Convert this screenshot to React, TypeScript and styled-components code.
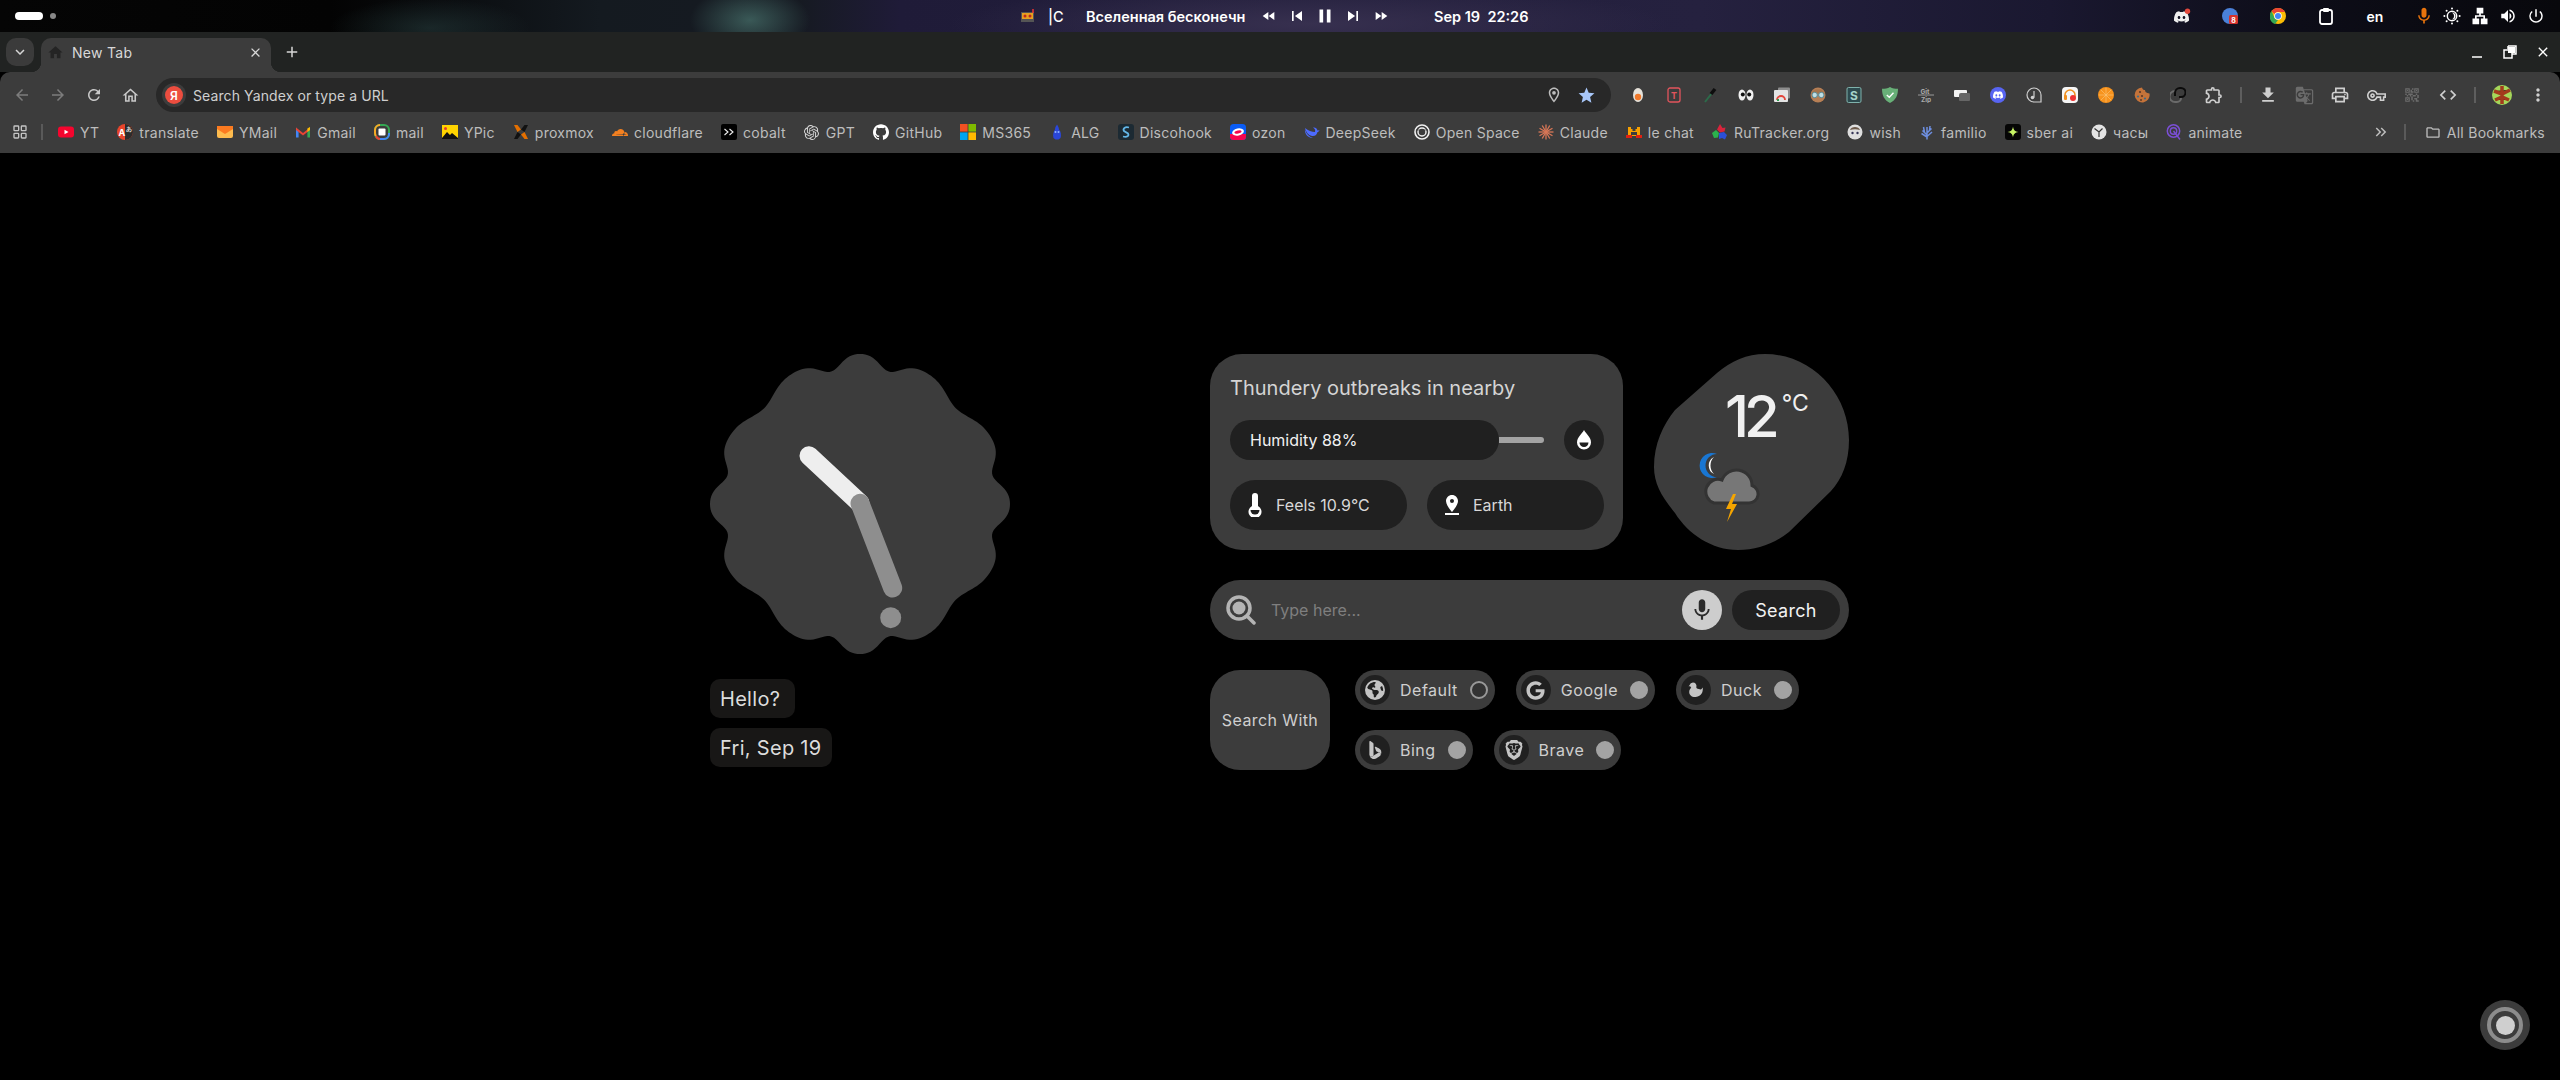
import React from "react";
import styled, { createGlobalStyle } from "styled-components";
import {
  MdArrowBack, MdArrowForward, MdRefresh, MdOutlineHome, MdHome, MdOutlineLocationOn, MdStar, MdFileDownload,
  MdOutlinePrint, MdOutlineVpnKey, MdQrCode2, MdCode, MdMoreVert, MdOutlineFolder, MdKeyboardDoubleArrowRight,
  MdOutlineExtension, MdGTranslate, MdSkipPrevious, MdSkipNext, MdPause, MdFastRewind, MdFastForward, MdMic,
  MdLan, MdVolumeUp, MdPowerSettingsNew, MdKeyboardArrowDown, MdClose, MdAdd, MdPinDrop,
} from "react-icons/md";
import { LayoutGrid } from "lucide-react";
import { SiDiscord, SiGithub, SiOpenai, SiCloudflare, SiBrave } from "react-icons/si";
import { FaEarthAmericas, FaGoogle } from "react-icons/fa6";
import { BsBing } from "react-icons/bs";

const Global = createGlobalStyle`
  html, body { margin: 0; padding: 0; background: #000; }
  body { font-family: Inter, "Liberation Sans", sans-serif; }
  * { box-sizing: border-box; }
`;

const Page = styled.div`
  width: 2560px; height: 1080px; overflow: hidden; display: flex; flex-direction: column; background: #000;
`;

/* ---------- system bar ---------- */
const SystemBar = styled.div`
  height: 32px; flex: none; display: grid; grid-template-columns: 1020px 511px 1fr; align-items: center;
  color: #fff; font-size: 13px; font-weight: 600;
  background:
    radial-gradient(ellipse 60px 34px at 750px 20px, rgba(70,110,105,.75), transparent),
    radial-gradient(ellipse 100px 30px at 430px 28px, rgba(50,80,80,.4), transparent),
    radial-gradient(ellipse 360px 40px at 1310px 24px, #37304f, transparent),
    linear-gradient(90deg, #050505 0, #030303 330px, #141a20 600px, #161a22 800px, #1f1b38 900px, #25213f 1700px, #1a1830 2050px, #0d0d18 2300px, #08080c 2560px);
`;
const Workspaces = styled.div`display: flex; align-items: center; gap: 7px; padding-left: 15px;`;
const WorkspacePill = styled.span`width: 28px; height: 8px; border-radius: 4px; background: #fff;`;
const WorkspaceDot = styled.span`width: 6px; height: 6px; border-radius: 50%; background: #888;`;
const MediaRow = styled.div`display: flex; align-items: center; width: 511px; font-size: 14.5px;`;
const MediaGlyph = styled.span`
  width: 20px; margin-left: -2px; margin-right: 10px; height: 16px; display: flex; align-items: center; justify-content: center;
`;
const MediaTag = styled.span`width: 38px; font-weight: 500;`;
const MediaTitle = styled.span`width: 163px; white-space: nowrap;`;
const MediaControls = styled.div`display: flex; margin-left: 6px; width: 140px;`;
const MediaBtn = styled.span`width: 28px; height: 20px; display: flex; justify-content: center; align-items: center;`;
const Clocktext = styled.span`margin-left: 39px; white-space: pre;`;
const TrayRow = styled.div`display: flex; align-items: center; justify-content: flex-end; padding-right: 10px;`;
const TrayItem = styled.span<{ $w: number; $mr?: number }>`
  width: ${p => p.$w}px; height: 24px; margin-right: ${p => p.$mr ?? 0}px; display: flex; align-items: center; justify-content: center; font-size: 14px;
`;

/* ---------- tab strip ---------- */
const TabStrip = styled.div`
  height: 40px; flex: none; background: #212322; display: flex; padding: 6px 0 0 6px; color: #d6d6d6;
`;
const TabSearch = styled.div`
  width: 28px; height: 28px; border-radius: 10px; background: #3b3b3b; display: flex; align-items: center; justify-content: center;
`;
const Tab = styled.div`
  position: relative; width: 230px; height: 34px; margin-left: 7px; background: #3c3c3c; border-radius: 10px 10px 0 0;
  display: flex; align-items: center; padding: 0 8px 6px 6px; font-size: 14px; letter-spacing: .3px; color: #d8d8d8;
  &::before, &::after { content: ""; position: absolute; bottom: 0; width: 10px; height: 10px; }
  &::before { left: -10px; background: radial-gradient(circle at 0 0, transparent 10px, #3c3c3c 10.5px); }
  &::after { right: -10px; background: radial-gradient(circle at 100% 0, transparent 10px, #3c3c3c 10.5px); }
`;
const TabTitle = styled.span`flex: 1; margin-left: 8px;`;
const NewTab = styled.div`width: 28px; height: 28px; margin-left: 7px; display: flex; align-items: center; justify-content: center;`;
const WindowControls = styled.div`margin-left: auto; display: flex; height: 28px; align-items: center; padding-right: 1px;`;
const WindowBtn = styled.span`width: 33px; height: 28px; display: flex; align-items: center; justify-content: center;`;

/* ---------- toolbar ---------- */
const Chrome = styled.div`background: #3c3c3c; border-radius: 10px 10px 0 0; flex: none; height: 81px;`;
const Toolbar = styled.div`height: 44px; display: flex; align-items: flex-start; padding: 6px 0 0 4px; color: #c8c8c8;`;
const NavBtn = styled.span<{ $dim?: boolean }>`
  width: 36px; height: 34px; display: flex; align-items: center; justify-content: center;
  color: ${p => (p.$dim ? "#7c7c7c" : "#c8c8c8")};
`;
const Omnibox = styled.div`
  width: 1455px; height: 34px; margin-left: 8px; border-radius: 17px; background: #282828; display: flex; align-items: center;
  padding: 0 14px 0 9px; font-size: 14px; letter-spacing: .1px; color: #cfcfcf;
`;
const OmniBadge = styled.span`
  width: 18px; height: 18px; border-radius: 50%; background: #ec4d3f; color: #fff; font-size: 12px; font-weight: 600;
  display: flex; align-items: center; justify-content: center; margin-right: 10px; box-shadow: 0 0 0 3px #3c3c3c;
`;
const OmniText = styled.span`flex: 1;`;
const OmniIcon = styled.span<{ $c: string }>`width: 32px; height: 20px; display: flex; justify-content: center; align-items: center; color: ${p => p.$c}; margin-right: -5px; margin-left: 5px;`;
const ExtGroup = styled.div`display: flex; margin-left: 9px;`;
const ToolGroup = styled.div`display: flex;`;
const ExtSlot = styled.span<{ $dim?: boolean }>`
  width: 36px; height: 34px; display: flex; align-items: center; justify-content: center;
  color: ${p => (p.$dim ? "#6c6c6c" : "#cfcfcf")};
`;
const Divider = styled.span<{ $mx: number }>`
  width: 2px; height: 16px; background: #5e5e5e; margin: 9px ${p => p.$mx}px 0; flex: none;
`;

/* ---------- bookmarks ---------- */
const BookmarkBar = styled.div`height: 32px; display: flex; align-items: center; padding-left: 11px; font-size: 14px; color: #bdbdbd;`;
const AppsBtn = styled.span`width: 18px; display: flex; justify-content: center; color: #c4c4c4;`;
const BookmarkSep = styled.span<{ $ml: number; $mr: number }>`width: 2px; height: 16px; background: #5a5a5a; margin: 0 ${p => p.$mr}px 0 ${p => p.$ml}px;`;
const Bookmark = styled.span`display: flex; align-items: center; gap: 6px; padding: 0 9px; white-space: nowrap; letter-spacing: .27px;`;
const BookmarkEnd = styled.div`margin-left: auto; display: flex; align-items: center; padding-right: 6px;`;
const FavBox = styled.span`width: 16px; height: 16px; display: flex; align-items: center; justify-content: center; flex: none;`;

/* ---------- new tab page ---------- */
const Main = styled.main`
  flex: 1; display: flex; justify-content: center; gap: 200px; padding: 201px 1px 0 0;
  font-family: Inter, "Open Sans", sans-serif;
`;
const LeftCol = styled.section`width: 300px; display: flex; flex-direction: column; align-items: flex-start;`;
const ClockFace = styled.svg`width: 300px; height: 300px; display: block; margin-bottom: 25px;`;
const Tag = styled.div`
  height: 39px; min-width: 85px; padding: 0 10px; margin-bottom: 10px; border-radius: 10px; background: #181716; color: #dcdcdc;
  font-size: 20px; letter-spacing: .3px; display: flex; align-items: center;
`;
const RightCol = styled.section`width: 639px; display: flex; flex-direction: column; gap: 30px;`;
const WeatherRow = styled.div`display: flex; justify-content: space-between;`;
const Card = styled.div`
  width: 413px; height: 196px; border-radius: 32px; background: #3c3c3c; padding: 20px 19px 0 20px;
`;
const CardTitle = styled.div`height: 28px; margin-bottom: 18px; font-size: 20px; line-height: 28px; color: #d4d4d4; white-space: nowrap;`;
const HumidityRow = styled.div`display: flex; gap: 20px; margin-bottom: 20px;`;
const Track = styled.div`width: 314px; height: 40px; display: flex; align-items: center;`;
const TrackFill = styled.div`
  height: 40px; border-radius: 20px; background: #202020; color: #f2f2f2; font-size: 16px; display: flex; align-items: center; padding-left: 20px;
`;
const TrackRest = styled.div`flex: 1; height: 6px; background: #a3a3a3; border-radius: 0 3px 3px 0;`;
const RoundIcon = styled.div`width: 40px; height: 40px; border-radius: 50%; background: #202020; display: flex; align-items: center; justify-content: center;`;
const InfoRow = styled.div`display: flex; gap: 20px;`;
const InfoPill = styled.div`
  width: 177px; height: 50px; border-radius: 25px; background: #202020; display: flex; align-items: center; padding-left: 9px; gap: 5px;
  font-size: 16px; color: #d8d8d8; white-space: nowrap;
`;
const InfoIcon = styled.span`width: 32px; display: flex; justify-content: center;`;
const Blob = styled.div`
  width: 195px; height: 196px; background: #3c3c3c; padding: 33px 0 0 40px;
  clip-path: path("M111 0 C158 0 195 40 195 86 C195 108 188 125 177 137 L135 178 C120 190 103 196 84 196 C58 196 34 180 21 159 C8 143 0 130 0 113 C0 90 9 71 21 56 L63 19 C77 7 93 0 111 0 Z");
`;
const Temp = styled.div`display: flex; align-items: flex-start; margin-left: 31px; height: 65px; color: #f0f0f0;`;
const TempValue = styled.span`font-size: 58px; line-height: 58px; font-weight: 500; letter-spacing: -5px; margin-right: 7px;`;
const TempUnit = styled.span`font-size: 23px; line-height: 26px; margin-top: 3px;`;
const WeatherGlyph = styled.svg`width: 66px; height: 71px; display: block;`;
const SearchBar = styled.form`
  height: 60px; border-radius: 30px; background: #3c3c3c; display: flex; align-items: center; padding: 0 9px 0 16px;
`;
const SearchInput = styled.input`
  flex: 1; background: transparent; border: 0; outline: 0; margin-left: 13px; font: 400 16px Inter, sans-serif; color: #ddd;
  &::placeholder { color: #7f7f7f; opacity: 1; }
`;
const MicBtn = styled.span`width: 40px; height: 40px; border-radius: 50%; background: #cdcdcd; display: flex; align-items: center; justify-content: center; color: #2b2b2b;`;
const SearchBtn = styled.span`width: 108px; height: 40px; margin-left: 10px; border-radius: 20px; background: #202020; color: #f2f2f2; font-size: 18px; letter-spacing: .3px; display: flex; align-items: center; justify-content: center;`;
const EngineRow = styled.div`display: flex; gap: 25px;`;
const EngineHead = styled.div`width: 120px; height: 100px; flex: none; border-radius: 30px; background: #3c3c3c; color: #cfcfcf; font-size: 16px; letter-spacing: .4px; display: flex; align-items: center; justify-content: center; white-space: nowrap;`;
const Chips = styled.div`display: flex; flex-wrap: wrap; gap: 20px 21px; width: 494px; align-content: flex-start;`;
const Chip = styled.label`
  height: 40px; border-radius: 20px; background: #3c3c3c; display: flex; align-items: center; padding: 0 7px 0 5px; color: #cfcfcf; font-size: 16px;
`;
const ChipIcon = styled.span`width: 30px; height: 30px; border-radius: 50%; background: #202020; display: flex; align-items: center; justify-content: center; color: #c4c4c4; margin-right: 10px;`;
const ChipLabel = styled.span`margin-right: 12px; letter-spacing: .5px;`;
const Radio = styled.span<{ $off?: boolean }>`
  width: 18px; height: 18px; border-radius: 50%; background: ${p => (p.$off ? "#333" : "#a3a3a3")}; border: 2px solid ${p => (p.$off ? "#999" : "#a3a3a3")};
`;
const Floater = styled.div`
  position: fixed; right: 30px; bottom: 30px; width: 50px; height: 50px; border-radius: 50%; background: #3c3c3c;
  display: flex; align-items: center; justify-content: center;
`;
const FloaterRing = styled.div`width: 36px; height: 36px; border-radius: 50%; border: 4px solid #8c8c8c; background: #3c3c3c; display: flex; align-items: center; justify-content: center;`;
const FloaterCore = styled.div`width: 19px; height: 19px; border-radius: 50%; background: #cfcfcf;`;

/* ---------- drawings ---------- */
const Ico: React.FC<{ children: React.ReactNode }> = ({ children }) => (
  <svg width="16" height="16" viewBox="0 0 16 16">{children}</svg>
);
const txt = { fontFamily: "Inter, sans-serif", fontWeight: 700 } as const;

const fav: Record<string, React.ReactNode> = {
  yt: <Ico><rect y="2.5" width="16" height="11" rx="3" fill="#f5052e" /><path d="M6.5 5.7v4.6L10.5 8z" fill="#fff" /></Ico>,
  translate: <Ico><circle cx="8" cy="8" r="8" fill="#e8452c" /><path d="M8 0a8 8 0 0 1 0 16z" fill="#2c2c2c" /><text x="1.5" y="12" fontSize="9" fill="#fff" style={txt}>A</text><text x="8.5" y="7" fontSize="6" fill="#ddd" style={txt}>あ</text></Ico>,
  ymail: <Ico><rect y="2" width="16" height="12" rx="2" fill="#fdbb4e" /><path d="M0 2h16v3L8 10 0 5z" fill="#fb7a20" /></Ico>,
  gmail: <Ico><path d="M1 3.5v10h2.6V7z" fill="#4285f4" /><path d="M15 3.5v10h-2.6V7z" fill="#34a853" /><path d="M1 3.5 8 9l7-5.5V6L8 11.500 1 6z" fill="#ea4335" /><path d="M12.400 4.500 15 3v3l-2.600 2z" fill="#fbbc04" /></Ico>,
  mail: <Ico><rect x="1" y="1" width="14" height="14" rx="5" fill="none" stroke="#34a853" strokeWidth="2" /><path d="M2 12a5 5 0 0 1-1-3V6a5 5 0 0 1 5-5" fill="none" stroke="#f9a825" strokeWidth="2" /><path d="M6 15a5 5 0 0 1-4-3" fill="none" stroke="#ea4335" strokeWidth="2" /><path d="M15 9v1a5 5 0 0 1-5 5H6" fill="none" stroke="#4285f4" strokeWidth="2" /><rect x="4.500" y="4.500" width="7" height="7" rx="1" fill="#fff" /></Ico>,
  ypic: <Ico><rect y="1" width="16" height="14" fill="#ffd400" /><circle cx="3.500" cy="4.500" r="1.500" fill="#e53935" /><path d="M0 14 5 8l3 3 2-2 6 5v1H0z" fill="#111" /></Ico>,
  proxmox: <Ico><path d="M1 1h3.500L8 5.500 4.500 8z" fill="#e57000" /><path d="M15 1h-3.500L8 5.500 11.500 8z" fill="#111" /><path d="M1 15h3.500L8 10.500 4.500 8z" fill="#111" /><path d="M15 15h-3.500L8 10.500 11.500 8z" fill="#e57000" /></Ico>,
  cloudflare: <SiCloudflare size={17} color="#f38020" />,
  cobalt: <Ico><rect width="16" height="16" rx="2" fill="#000" /><path d="M3.500 5 7 8l-3.500 3M8.500 5 12 8l-3.500 3" fill="none" stroke="#eee" strokeWidth="1.100" /></Ico>,
  gpt: <SiOpenai size={15} color="#d8d8d8" />,
  github: <SiGithub size={16} color="#fff" />,
  ms: <Ico><rect width="7.600" height="7.600" fill="#f25022" /><rect x="8.400" width="7.600" height="7.600" fill="#7fba00" /><rect y="8.400" width="7.600" height="7.600" fill="#00a4ef" /><rect x="8.400" y="8.400" width="7.600" height="7.600" fill="#ffb900" /></Ico>,
  alg: <Ico><path d="M8 0.500c1 2 2 3 2 5 2 2 2.500 6 1.500 8.500L9.500 15.500h-3L4.500 14C3.500 11 4.500 7.500 6 5.500 6 3.500 7 2 8 .5z" fill="#2a46d8" /><circle cx="6.500" cy="8" r="1" fill="#8fb4ff" /><circle cx="9.500" cy="8" r="1" fill="#8fb4ff" /></Ico>,
  discohook: <Ico><rect width="16" height="16" rx="3" fill="#1c2a33" /><path d="M11 3.500C7 2.500 4.500 4.500 6 7l4 2.500c1.500 2.500-1 4-5 3" fill="none" stroke="#63b7e8" strokeWidth="1.800" /></Ico>,
  ozon: <Ico><rect width="16" height="16" rx="3.500" fill="#0a5cf5" /><path d="M0 10h16v2.500a3.500 3.500 0 0 1-3.500 3.500h-9A3.500 3.500 0 0 1 0 12.500z" fill="#f5054f" /><ellipse cx="8" cy="8" rx="6" ry="3.600" fill="#fff" transform="rotate(-12 8 8)" /><ellipse cx="8" cy="8" rx="3.600" ry="1.500" fill="#f5054f" transform="rotate(-12 8 8)" /></Ico>,
  deepseek: <Ico><path d="M1 4c1 4 3 7 7 8 3 .5 5-1.500 5.500-4 .5 0 1.500-.5 2-2-1 .5-1.500.5-2 .5C13 4 11 3 9 3.500c2 1 2.500 3 2 4.500C8 8 4 6.500 1 4z" fill="#4d6bfe" /><path d="M1 5c-.5 3 1 7 5 8.500 1 .3 2 .4 3 .2C5 13 2 9.500 1 5z" fill="#4d6bfe" /></Ico>,
  openspace: <Ico><circle cx="8" cy="8" r="7" fill="none" stroke="#f2f2f2" strokeWidth="1.600" /><circle cx="8" cy="8" r="4" fill="none" stroke="#f2f2f2" strokeWidth="1.400" /><path d="M2 6h12" stroke="#3c3c3c" strokeWidth=".7" /></Ico>,
  claude: <Ico>{Array.from({ length: 12 }, (_, i) => <path key={i} d={`M8 8 L${(8 + 7.5 * Math.cos((i * Math.PI) / 6)).toFixed(2)} ${(8 + 7.5 * Math.sin((i * Math.PI) / 6)).toFixed(2)}`} stroke="#d97757" strokeWidth="1.300" />)}</Ico>,
  lechat: <Ico><path d="M2 3h3v2h1.500V7h3V5H11V3h3v9H2z" fill="#f7a000" /><path d="M0 11h6v3H0zM10 11h6v3h-6z" fill="#e02010" /><path d="M5 8h6v3H5z" fill="#3c3c3c" /></Ico>,
  rutracker: <Ico><path d="M8 0l2.500 4 3-.5-1 4-4.500 1-3-3z" fill="#d8243c" /><path d="M0 9l4-3 3 3-1 4.500-4 .5z" fill="#2bb24c" /><path d="M7 9l5-1 3 3-2 4.500-3-1.500-3 1z" fill="#2b4fd8" /></Ico>,
  wish: <Ico><circle cx="8" cy="8" r="7.500" fill="#dedede" /><path d="M3 6c1-4 9-4 10 0-3-1-7-1-10 0z" fill="#6d5a4a" /><circle cx="5.500" cy="9" r="1.200" fill="#335" /><circle cx="10.500" cy="9" r="1.200" fill="#335" /></Ico>,
  familio: <Ico><path d="M8 15.500V3M8 11 3.500 6.500M8 9 12.500 4.500M8 12.500 13 8M8 13 2.500 9.500M5.500 8.500 4.500 3M10.500 6.500 11 2" fill="none" stroke="#6d8ee0" strokeWidth="1.500" /></Ico>,
  sber: <Ico><rect width="16" height="16" rx="3" fill="#050505" /><path d="M8 2.500C8.500 6 10 7.500 13.500 8 10 8.500 8.500 10 8 13.500 7.500 10 6 8.500 2.500 8 6 7.500 7.500 6 8 2.500z" fill="#c7f464" /></Ico>,
  clock: <Ico><circle cx="8" cy="8" r="7.500" fill="#e4e4e4" /><path d="M3.500 4.500 8 8l3.500-3.500M8 8v5" fill="none" stroke="#333" strokeWidth="1.200" /></Ico>,
  animate: <Ico><circle cx="7.500" cy="7" r="6.200" fill="none" stroke="#7b4fd6" strokeWidth="1.500" /><circle cx="7.500" cy="7" r="3.200" fill="none" stroke="#7b4fd6" strokeWidth="1.400" /><path d="M7.500 7 14 15.500" stroke="#7b4fd6" strokeWidth="1.400" /></Ico>,
};

const ext: { key: string; node: React.ReactNode }[] = [
  { key: "egg", node: <svg width="12" height="16" viewBox="0 0 12 16"><ellipse cx="6" cy="8" rx="5" ry="7" fill="#e6e2da" /><circle cx="6" cy="10" r="3.200" fill="#f0782a" /></svg> },
  { key: "t", node: <svg width="16" height="16" viewBox="0 0 16 16"><rect x="1" y="1" width="12" height="14" rx="2" transform="translate(1)" fill="none" stroke="#e2545c" strokeWidth="1.300" /><text x="8" y="12" fontSize="9" textAnchor="middle" fill="#e2545c" style={txt}>T</text></svg> },
  { key: "dropper", node: <svg width="14" height="16" viewBox="0 0 14 16"><path d="M2 15 9 6" stroke="#2c6b4a" strokeWidth="2" /><path d="M8 7l4-5" stroke="#0d0d0d" strokeWidth="3.500" /></svg> },
  { key: "eyes", node: <svg width="16" height="14" viewBox="0 0 16 14"><ellipse cx="4" cy="7" rx="3.500" ry="5.500" fill="#f2f2f2" /><ellipse cx="12" cy="7" rx="3.500" ry="5.500" fill="#f2f2f2" /><circle cx="4.800" cy="6.500" r="2" fill="#111" /><circle cx="11.200" cy="6.500" r="2" fill="#111" /></svg> },
  { key: "win", node: <svg width="16" height="16" viewBox="0 0 16 16"><rect x="4" y="0.500" width="12" height="11" rx="1" fill="#8d8d8d" /><rect x="0" y="3" width="14" height="12" rx="1" fill="#e4e4e4" /><path d="M3 13a4 4 0 0 1 8 0" fill="none" stroke="#e3453a" strokeWidth="1.800" /><path d="M3 13h2" stroke="#2e9e4f" strokeWidth="1.800" /></svg> },
  { key: "face", node: <svg width="16" height="16" viewBox="0 0 16 16"><circle cx="8" cy="8" r="7.500" fill="#b77f55" /><path d="M1 7a7.500 7.500 0 0 1 14 0z" fill="#a5754d" /><circle cx="4.700" cy="8" r="2.700" fill="#bfe0e6" stroke="#5a8b95" /><circle cx="11.300" cy="8" r="2.700" fill="#bfe0e6" stroke="#5a8b95" /></svg> },
  { key: "s", node: <svg width="16" height="16" viewBox="0 0 16 16"><rect x="1" y="0.500" width="14" height="15" rx="1.500" fill="#2d4a4e" stroke="#7fb2ac" strokeWidth="1" /><text x="8" y="12.500" fontSize="12" textAnchor="middle" fill="#a5d3cb" style={txt}>S</text></svg> },
  { key: "shield", node: <svg width="16" height="16" viewBox="0 0 16 16"><path d="M8 0c2.500 1.500 5 1.700 8 1.700C16 8 14 13 8 16 2 13 0 8 0 1.700 3 1.700 5.500 1.500 8 0z" fill="#68b078" /><path d="M4.800 8 7.300 10.300 11.500 5.800" fill="none" stroke="#fff" strokeWidth="1.400" /></svg> },
  { key: "zip", node: <svg width="16" height="16" viewBox="0 0 16 16"><text x="7" y="6.500" fontSize="6.500" textAnchor="middle" fill="#aaa" style={txt}>Git</text><path d="M0 8h16" stroke="#999" strokeWidth="1" /><text x="8" y="15" fontSize="6.500" textAnchor="middle" fill="#aaa" style={txt}>Zip</text></svg> },
  { key: "overlap", node: <svg width="16" height="14" viewBox="0 0 16 14"><rect x="5" y="5" width="11" height="8" rx="1" fill="#666" /><path d="M0 3a1 1 0 0 1 1-1h11a1 1 0 0 1 1 1v2H7a2 2 0 0 0-2 2v2H1a1 1 0 0 1-1-1z" fill="#f2f2f2" /></svg> },
  { key: "discord", node: <svg width="16" height="16" viewBox="0 0 16 16"><circle cx="8" cy="8" r="8" fill="#5865f2" /><SiDiscord x="3" y="3" size={10} color="#fff" /></svg> },
  { key: "note", node: <svg width="16" height="16" viewBox="0 0 16 16"><path d="M8 1a7 7 0 0 1 7 7v7H8A7 7 0 0 1 8 1z" fill="none" stroke="#cfcfcf" strokeWidth="1.200" /><circle cx="6.500" cy="10.500" r="1.800" fill="#cfcfcf" /><path d="M8 10.500V4" stroke="#cfcfcf" strokeWidth="1.200" /></svg> },
  { key: "phones", node: <svg width="16" height="16" viewBox="0 0 16 16"><rect width="16" height="16" rx="4" fill="#f6f6f6" /><path d="M3 10V8a5 5 0 0 1 10 0v2" fill="none" stroke="#f09020" strokeWidth="1.600" /><rect x="2" y="8" width="3" height="5" rx="1" fill="#f09020" /><circle cx="11" cy="11" r="3" fill="#e33" /></svg> },
  { key: "orange", node: <svg width="16" height="16" viewBox="0 0 16 16"><circle cx="8" cy="8" r="8" fill="#f7931e" /><path d="M8 1v14M1 8h14M3 3l10 10M13 3 3 13" stroke="#fbc77a" strokeWidth=".6" /></svg> },
  { key: "cookie", node: <svg width="16" height="16" viewBox="0 0 16 16"><path d="M8 .5c.5 2 1.500 2.500 3 2.500 0 2 1 3 4.500 3.500A7.500 7.500 0 1 1 8 .5z" fill="#c4733a" /><circle cx="6" cy="5" r="1.100" fill="#5a3a28" /><circle cx="4" cy="9.500" r="1.100" fill="#3d6c8a" /><circle cx="8" cy="9" r="1.100" fill="#5a3a28" /><circle cx="11" cy="11.500" r="1.100" fill="#3d6c8a" /><circle cx="7" cy="13" r="1" fill="#5a3a28" /></svg> },
  { key: "link", node: <svg width="16" height="16" viewBox="0 0 16 16"><path d="M6 4H5a4 4 0 0 0 0 11h2a4 4 0 0 0 4-4V9" fill="none" stroke="#6a6a6a" strokeWidth="2" /><path d="M5 9V6a5 5 0 0 1 5-5h1a4 4 0 0 1 0 9H9" fill="none" stroke="#0b0b0b" strokeWidth="2" /></svg> },
  { key: "puzzle", node: <MdOutlineExtension size={20} /> },
];

const bookmarks: [string, string][] = [
  ["yt", "YT"], ["translate", "translate"], ["ymail", "YMail"], ["gmail", "Gmail"], ["mail", "mail"], ["ypic", "YPic"],
  ["proxmox", "proxmox"], ["cloudflare", "cloudflare"], ["cobalt", "cobalt"], ["gpt", "GPT"], ["github", "GitHub"],
  ["ms", "MS365"], ["alg", "ALG"], ["discohook", "Discohook"], ["ozon", "ozon"], ["deepseek", "DeepSeek"],
  ["openspace", "Open Space"], ["claude", "Claude"], ["lechat", "le chat"], ["rutracker", "RuTracker.org"], ["wish", "wish"],
  ["familio", "familio"], ["sber", "sber ai"], ["clock", "часы"], ["animate", "animate"],
];

const DuckIcon = () => (
  <svg width="20" height="20" viewBox="0 0 20 20" fill="currentColor">
    <path d="M7 2.500a3.500 3.500 0 0 1 3.400 4.300c-.3 1 .3 1.700 1.300 2l3 .7c.8-.3 1.500-1.300 2-2 .6 4-1 9-7 9.500-4 .3-6.500-2-6.500-5 0-2 1-3.300 2-4.200-.4-.5-.8-1-1-1.500H2.500C3 6 3.500 5.500 3.600 5A3.500 3.500 0 0 1 7 2.500z" />
  </svg>
);

const engines = [
  { name: "Default", icon: <FaEarthAmericas size={20} />, off: true },
  { name: "Google", icon: <FaGoogle size={19} /> },
  { name: "Duck", icon: <DuckIcon /> },
  { name: "Bing", icon: <BsBing size={18} /> },
  { name: "Brave", icon: <SiBrave size={20} /> },
];

function scallopPath() {
  const pts: string[] = [];
  for (let i = 0; i < 360; i++) {
    const t = (i * Math.PI) / 180;
    const phi = t + 0.055 * Math.sin(4 * t);
    const f = Math.cos(12 * phi) - 0.15 * Math.cos(24 * phi);
    const peak = 14.5 - 4.6 * Math.sin(2 * t) ** 2;
    const r = 135.5 + (peak * (f + 1.15)) / 2;
    pts.push(`${(150 + r * Math.sin(t)).toFixed(2)} ${(150 - r * Math.cos(t)).toFixed(2)}`);
  }
  return `M${pts.join("L")}Z`;
}

const TapeIcon = () => (
  <svg width="14" height="14" viewBox="0 0 14 14"><rect x="0" y="3" width="13" height="10" fill="#555" /><rect x="1" y="4" width="11" height="6" fill="#e8a020" /><circle cx="4" cy="7" r="1.500" fill="#c0281c" /><circle cx="9" cy="7" r="1.500" fill="#c0281c" /><path d="M12 0v4" stroke="#e33" strokeWidth="1.500" /></svg>
);
const ChromeLogo = () => (
  <svg width="16" height="16" viewBox="0 0 16 16"><circle cx="8" cy="8" r="8" fill="#fbbc04" /><path d="M8 0a8 8 0 0 1 6.930 4H8a4 4 0 0 0-3.460 2L1.600 3.200A8 8 0 0 1 8 0z" fill="#ea4335" /><path d="M1.600 3.200 4.540 10A4 4 0 0 0 8 12L5 16A8 8 0 0 1 1.600 3.200z" fill="#34a853" /><circle cx="8" cy="8" r="3.800" fill="#fff" /><circle cx="8" cy="8" r="3" fill="#4285f4" /></svg>
);
const BadgeApp = () => (
  <svg width="16" height="16" viewBox="0 0 16 16"><circle cx="8" cy="8" r="8" fill="#4a80d8" /><rect x="7" y="7" width="9" height="9" rx="1.500" fill="#d6322c" /><text x="11.500" y="14.500" fontSize="7" textAnchor="middle" fill="#fff" style={txt}>8</text></svg>
);
const TrayDiscord = () => (
  <svg width="18" height="16" viewBox="0 0 18 16"><SiDiscord x="1" y="1.500" size={15} color="#f0f0f0" /><circle cx="14.500" cy="3.200" r="2.700" fill="#e2483c" /></svg>
);
const ClipboardIcon = () => (
  <svg width="16" height="18" viewBox="0 0 16 18"><rect x="2" y="3" width="12" height="14" rx="2" fill="none" stroke="#fff" strokeWidth="1.800" /><rect x="5" y="1" width="6" height="4" rx="1" fill="#fff" /></svg>
);
const SunIcon = () => (
  <svg width="18" height="18" viewBox="0 0 18 18">
    <circle cx="9" cy="9" r="4.700" fill="none" stroke="#fff" strokeWidth="1.500" />
    <path d="M9 5.500a3.500 3.500 0 0 1 0 7 4 4 0 0 0 0-7z" fill="#fff" />
    {Array.from({ length: 8 }, (_, i) => <circle key={i} cx={9 + 7.6 * Math.cos((i * Math.PI) / 4)} cy={9 + 7.6 * Math.sin((i * Math.PI) / 4)} r="1" fill="#fff" />)}
  </svg>
);
const DropIcon = () => (
  <svg width="16" height="20" viewBox="0 0 16 20"><path d="M8 0c2 4 7 7 7 12.500A7 7 0 0 1 1 12.500C1 7 6 4 8 0z" fill="#fff" /><path d="M3.500 12.500h9a4.500 4.500 0 0 1-9 0z" fill="#202020" /></svg>
);
const ThermoIcon = () => (
  <svg width="14" height="24" viewBox="0 0 14 24"><path d="M4 3a3 3 0 0 1 6 0v10a6.500 6.500 0 1 1-6 0z" fill="#fff" /><path d="M2.500 17h9a4.500 4.500 0 0 1-9 0z" fill="#202020" /></svg>
);
const SearchGlyph = () => (
  <svg width="30" height="30" viewBox="0 0 30 30"><circle cx="13" cy="13" r="11" fill="none" stroke="#b4b4b4" strokeWidth="3.500" /><circle cx="13" cy="13" r="6.500" fill="#b4b4b4" /><path d="M21 21l7 7" stroke="#b4b4b4" strokeWidth="3.500" strokeLinecap="round" /></svg>
);
const MinimizeBar = () => (
  <svg width="14" height="14" viewBox="0 0 14 14"><path d="M2 12h10" stroke="#fff" strokeWidth="1.500" /></svg>
);
const RestoreIcon = () => (
  <svg width="14" height="14" viewBox="0 0 14 14"><path d="M5 1h8v8H9M5 1v3M1 5h8v8H1z" fill="none" stroke="#fff" strokeWidth="1.500" /><rect x="5" y="2" width="7" height="6" fill="#fff" /></svg>
);

const clockD = scallopPath();

export default function App() {
  return (
    <Page>
      <Global />
      <SystemBar>
        <Workspaces><WorkspacePill /><WorkspaceDot /></Workspaces>
        <MediaRow>
          <MediaGlyph><TapeIcon /></MediaGlyph>
          <MediaTag>|C</MediaTag>
          <MediaTitle>Вселенная бесконечн</MediaTitle>
          <MediaControls>
            <MediaBtn><MdFastRewind size={16} /></MediaBtn>
            <MediaBtn><MdSkipPrevious size={20} /></MediaBtn>
            <MediaBtn><MdPause size={22} /></MediaBtn>
            <MediaBtn><MdSkipNext size={20} /></MediaBtn>
            <MediaBtn><MdFastForward size={16} /></MediaBtn>
          </MediaControls>
          <Clocktext>Sep 19  22:26</Clocktext>
        </MediaRow>
        <TrayRow>
          <TrayItem $w={48}><TrayDiscord /></TrayItem>
          <TrayItem $w={48}><BadgeApp /></TrayItem>
          <TrayItem $w={48}><ChromeLogo /></TrayItem>
          <TrayItem $w={48}><ClipboardIcon /></TrayItem>
          <TrayItem $w={50} $mr={10}>en</TrayItem>
          <TrayItem $w={28}><MdMic size={20} color="#e8730c" /></TrayItem>
          <TrayItem $w={28}><SunIcon /></TrayItem>
          <TrayItem $w={28}><MdLan size={20} /></TrayItem>
          <TrayItem $w={28}><MdVolumeUp size={18} /></TrayItem>
          <TrayItem $w={28}><MdPowerSettingsNew size={18} /></TrayItem>
        </TrayRow>
      </SystemBar>

      <TabStrip>
        <TabSearch><MdKeyboardArrowDown size={18} /></TabSearch>
        <Tab>
          <MdHome size={17} color="#242424" />
          <TabTitle>New Tab</TabTitle>
          <MdClose size={15} />
        </Tab>
        <NewTab><MdAdd size={18} /></NewTab>
        <WindowControls>
          <WindowBtn><MinimizeBar /></WindowBtn>
          <WindowBtn><RestoreIcon /></WindowBtn>
          <WindowBtn><MdClose size={16} color="#fff" /></WindowBtn>
        </WindowControls>
      </TabStrip>

      <Chrome>
        <Toolbar>
          <NavBtn $dim><MdArrowBack size={18} /></NavBtn>
          <NavBtn $dim><MdArrowForward size={18} /></NavBtn>
          <NavBtn><MdRefresh size={18} /></NavBtn>
          <NavBtn><MdOutlineHome size={19} /></NavBtn>
          <Omnibox>
            <OmniBadge>Я</OmniBadge>
            <OmniText>Search Yandex or type a URL</OmniText>
            <OmniIcon $c="#bdbdbd"><MdOutlineLocationOn size={18} /></OmniIcon>
            <OmniIcon $c="#a8c7fa"><MdStar size={19} /></OmniIcon>
          </Omnibox>
          <ExtGroup>
            {ext.map(e => <ExtSlot key={e.key}>{e.node}</ExtSlot>)}
          </ExtGroup>
          <Divider $mx={8} />
          <ToolGroup>
            <ExtSlot><MdFileDownload size={20} /></ExtSlot>
            <ExtSlot $dim><MdGTranslate size={19} /></ExtSlot>
            <ExtSlot><MdOutlinePrint size={20} /></ExtSlot>
            <ExtSlot><MdOutlineVpnKey size={19} /></ExtSlot>
            <ExtSlot $dim><MdQrCode2 size={18} /></ExtSlot>
            <ExtSlot><MdCode size={20} /></ExtSlot>
          </ToolGroup>
          <Divider $mx={8} />
          <ToolGroup>
            <ExtSlot>
              <svg width="20" height="20" viewBox="0 0 20 20"><circle cx="10" cy="10" r="10" fill="#a5d75a" /><path d="M2 6l8 3 8-4M3 15l7-3 7 3M10 1v18" stroke="#a33a1c" strokeWidth="3.500" /></svg>
            </ExtSlot>
            <ExtSlot><MdMoreVert size={20} /></ExtSlot>
          </ToolGroup>
        </Toolbar>
        <BookmarkBar>
          <AppsBtn><LayoutGrid size={16} strokeWidth={2} /></AppsBtn>
          <BookmarkSep $ml={12} $mr={6} />
          {bookmarks.map(([k, label]) => (
            <Bookmark key={label}><FavBox>{fav[k]}</FavBox>{label}</Bookmark>
          ))}
          <BookmarkEnd>
            <MdKeyboardDoubleArrowRight size={18} />
            <BookmarkSep $ml={14} $mr={10} />
            <Bookmark as="span"><FavBox><MdOutlineFolder size={19} /></FavBox>All Bookmarks</Bookmark>
          </BookmarkEnd>
        </BookmarkBar>
      </Chrome>

      <Main>
        <LeftCol>
          <ClockFace viewBox="0 0 300 300">
            <path d={clockD} fill="#3c3c3c" />
            <path d="M99 101.700L150 149.300" stroke="#eeeeee" strokeWidth="19" strokeLinecap="round" />
            <path d="M150 149.300L182.700 234" stroke="#8e8e8e" strokeWidth="19" strokeLinecap="round" />
            <circle cx="180.700" cy="263.700" r="10.500" fill="#8e8e8e" />
          </ClockFace>
          <Tag>Hello?</Tag>
          <Tag>Fri, Sep 19</Tag>
        </LeftCol>
        <RightCol>
          <WeatherRow>
            <Card>
              <CardTitle>Thundery outbreaks in nearby</CardTitle>
              <HumidityRow>
                <Track>
                  <TrackFill style={{ width: `${(269 / 314) * 100}%` }}>Humidity 88%</TrackFill>
                  <TrackRest />
                </Track>
                <RoundIcon><DropIcon /></RoundIcon>
              </HumidityRow>
              <InfoRow>
                <InfoPill><InfoIcon><ThermoIcon /></InfoIcon>Feels 10.9°C</InfoPill>
                <InfoPill><InfoIcon><MdPinDrop size={24} color="#fff" /></InfoIcon>Earth</InfoPill>
              </InfoRow>
            </Card>
            <Blob>
              <Temp><TempValue>12</TempValue><TempUnit>°C</TempUnit></Temp>
              <WeatherGlyph viewBox="0 0 66 71">
                <path d="M23 2A12.500 12.500 0 1 0 23 25 A11 11 0 0 1 23 2Z" fill="#1976d2" />
                <path d="M20 5A9.500 9.500 0 0 0 20 22 A12 12 0 0 1 20 5Z" fill="#fff" />
                <path d="M20 51h35a9 9 0 0 0 3-17.500A15.500 15.500 0 0 0 28 28A11.500 11.500 0 0 0 20 51z" fill="#777" stroke="#333" strokeWidth="3" />
                <path d="M39 42l-7 15h5l-4 13 10-18h-5l4-10z" fill="#f5a500" />
              </WeatherGlyph>
            </Blob>
          </WeatherRow>
          <SearchBar>
            <SearchGlyph />
            <SearchInput placeholder="Type here..." readOnly />
            <MicBtn><MdMic size={26} /></MicBtn>
            <SearchBtn>Search</SearchBtn>
          </SearchBar>
          <EngineRow>
            <EngineHead>Search With</EngineHead>
            <Chips>
              {engines.map(e => (
                <Chip key={e.name}>
                  <ChipIcon>{e.icon}</ChipIcon>
                  <ChipLabel>{e.name}</ChipLabel>
                  <Radio $off={e.off} />
                </Chip>
              ))}
            </Chips>
          </EngineRow>
        </RightCol>
      </Main>
      <Floater><FloaterRing><FloaterCore /></FloaterRing></Floater>
    </Page>
  );
}
